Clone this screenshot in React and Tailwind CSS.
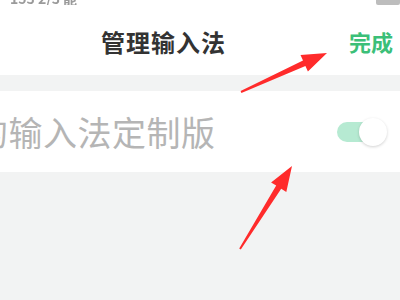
export default function App() {
  const font = { fontFamily: '"Noto Sans CJK SC", "Noto Sans", sans-serif' };
  return (
    <div className="relative w-[400px] h-[300px] overflow-hidden bg-[#f2f3f3]" style={font}>
      <div className="bg-white h-[75px] flex flex-col">
        <div className="h-[5px] overflow-hidden flex justify-between items-end">
          <span className="ml-[10px] text-[14px] leading-[14px] text-[#9a9a9a] blur-[0.6px] font-bold">153 2/3 能</span>
          <span className="w-[24px] h-[5px] rounded-b-[2px] bg-[#bdbdbd] mr-0" />
        </div>
        <div className="flex-1 flex items-center justify-between pl-[101px] pr-[7px] pt-[3px]">
          <span className="text-[24px] font-bold text-[#333333] tracking-[1px]">管理输入法</span>
          <span className="text-[22px] font-bold text-[#3bbf78]">完成</span>
        </div>
      </div>
      <div className="h-[16px]" />
      <div className="bg-white h-[81px] flex items-center justify-between">
        <span className="ml-[-26px] text-[34px] text-[#b5b5b5] leading-none tracking-[0.5px]">的输入法定制版</span>
        <div className="relative w-[50px] h-[28px] mr-[13px] flex items-center">
          <div className="w-[36px] h-[20px] rounded-full bg-[#b6ead2]" />
          <div className="absolute right-0 top-0 w-[28px] h-[28px] rounded-full bg-white shadow-[0_1px_3px_rgba(0,0,0,0.18)]" />
        </div>
      </div>
      <svg className="absolute inset-0 pointer-events-none" width="400" height="300" viewBox="0 0 400 300">
        <polygon
          fill="#ff2b2b"
          points="241.4,92.9 305.4,66.0 307.9,71.5 327,53 300.5,55.1 303.0,60.6 240.6,91.1"
        />
        <polygon
          fill="#ff2b2b"
          points="240.8,249.5 281.2,188.8 286.3,192.0 292,166 271.1,182.4 276.2,185.6 239.2,248.5"
        />
      </svg>
    </div>
  );
}
